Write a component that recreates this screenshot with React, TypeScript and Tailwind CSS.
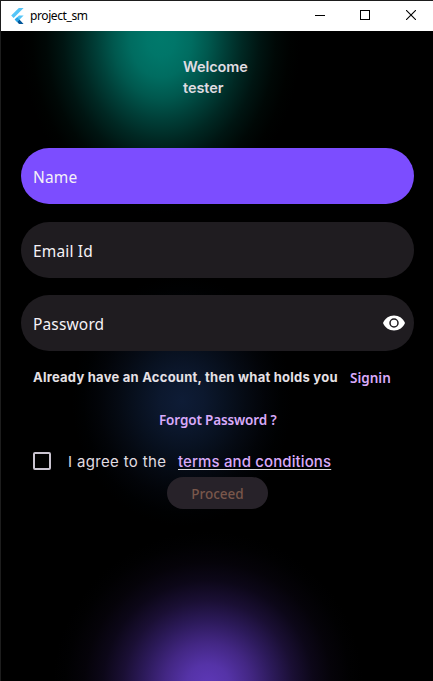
import React from "react";

const segoe = "font-['Noto_Sans','Open_Sans',sans-serif]";
const grotesk = "font-['Inter','Liberation_Sans',sans-serif]";

function FlutterLogo() {
  return (
    <svg width="13" height="16" viewBox="0 0 13 16" className="ml-[10px] mt-[-1px] shrink-0">
      <path d="M7.8 0H12.6L2.6 10L0.2 7.6Z" fill="#54c5f8" />
      <path d="M8 7.4H12.6L8.6 11.5L6.1 13.9L3.7 11.6Z" fill="#54c5f8" />
      <path d="M6 13.8L8.4 11.4L12.6 15.9H8Z" fill="#01579b" />
      <path d="M3.7 11.6L6.1 9.3L8.5 11.6L6.1 13.9Z" fill="#29a6e8" />
    </svg>
  );
}

function EyeIcon() {
  return (
    <svg width="24" height="24" viewBox="0 0 24 24" className="mt-[-1px]">
      <path d="M12 4.5C7 4.5 2.73 7.61 1 12c1.73 4.39 6 7.5 11 7.5s9.27-3.11 11-7.5c-1.73-4.39-6-7.5-11-7.5z" fill="white" />
      <circle cx="12" cy="12" r="4" fill="none" stroke="#1f1c20" strokeWidth="1.5" />
    </svg>
  );
}

function TitleBar() {
  return (
    <header className="flex h-[30px] shrink-0 items-center bg-white text-black">
      <FlutterLogo />
      <span className={`${segoe} ml-[6px] w-[59px] whitespace-nowrap text-[12px] leading-4 tracking-[-0.4px]`}>
        project_sm
      </span>
      <div className="ml-auto flex h-full pb-[2px]">
        <span className="flex w-[45px] items-center justify-center">
          <svg width="10" height="10" shapeRendering="crispEdges"><path d="M0 5.5H10" stroke="black" /></svg>
        </span>
        <span className="flex w-[46px] items-center justify-center">
          <svg width="10" height="10" shapeRendering="crispEdges"><path d="M.5 .5H9.5V9.5H.5Z" fill="none" stroke="black" /></svg>
        </span>
        <span className="flex w-[45px] items-center justify-center">
          <svg width="10" height="10"><path d="M0 0L10 10M10 0L0 10" stroke="black" strokeWidth="1.1" /></svg>
        </span>
      </div>
    </header>
  );
}

function Field({ label, active = false, icon }: { label: string; active?: boolean; icon?: React.ReactNode }) {
  return (
    <div className={`flex h-14 items-center justify-between rounded-[28px] pl-3 pr-[8px] ${active ? "bg-[#7c4dff]" : "bg-[#1f1c20]"}`}>
      <span className={`${segoe} mt-[2px] text-[15.5px] leading-6 tracking-[0.15px] text-[#f5f2f7]`}>{label}</span>
      {icon}
    </div>
  );
}

const glows =
  "bg-[radial-gradient(ellipse_140px_175px_at_160px_8px,#00796b_0%,#007669_10%,#006c60_22%,#00584e_34%,#003f38_46%,#002823_58%,#001512_70%,#000806_82%,#000201_92%,transparent_100%),radial-gradient(circle_155px_at_207px_655px,#5e38b8_0%,#5533a7_14%,#432784_28%,#2c1a5a_42%,#1a0f34_55%,#0c0718_68%,#050309_80%,#010102_92%,transparent_100%),radial-gradient(ellipse_110px_125px_at_181px_370px,#0e1c36_0%,#0c182e_20%,#081120_40%,#050a13_58%,#020408_76%,#000102_90%,transparent_100%)]";

export default function App() {
  return (
    <div className="flex h-[681px] w-[433px] flex-col overflow-hidden border-l border-t border-[#1d1d1d] bg-black">
      <TitleBar />
      <main className={`flex grow flex-col bg-black ${glows}`}>
        <h1 className={`${grotesk} ml-[182px] mt-[25px] w-[66px] text-[14.5px] font-semibold leading-[21px] tracking-[-0.08px] text-[#e0dde2]`}>
          Welcome tester
        </h1>
        <div className="ml-5 mr-[19px] mt-[50px] flex flex-col">
          <Field label="Name" active />
          <div className="mt-[18px]"><Field label="Email Id" /></div>
          <div className="mt-[17px]">
            <Field label="Password" icon={<EyeIcon />} />
          </div>
        </div>
        <div className="ml-8 mt-[17px] flex h-5 items-center whitespace-nowrap">
          <span className={`${grotesk} w-[317px] text-[13px] font-bold tracking-[0.24px] text-[#e6e1e5]`}>
            Already have an Account, then what holds you
          </span>
          <button className={`${segoe} text-[13.5px] font-semibold leading-5 text-[#d9aafa]`}>Signin</button>
        </div>
        <button className={`${segoe} ml-[158px] mt-[22px] h-5 w-[118px] whitespace-nowrap text-left text-[13.5px] font-semibold leading-5 tracking-[-0.14px] text-[#d9aafa]`}>
          Forgot Password ?
        </button>
        <div className={`${grotesk} ml-8 mt-[19px] flex h-6 items-center whitespace-nowrap text-[15px] text-[#e0dde2]`}>
          <span className="h-[18px] w-[18px] rounded-[2px] border-2 border-[#cac4d0]" />
          <span className="ml-[17px] w-[110px] pt-[2px] tracking-[0.34px]">I agree to the</span>
          <a className="pt-[2px] font-medium tracking-[0.12px] text-[#d9aafa] underline decoration-[#e0dde2] decoration-1 underline-offset-2">terms and conditions</a>
        </div>
        <button className={`${segoe} ml-[166px] mt-1 flex h-8 w-[101px] items-center justify-center rounded-full bg-[#272229] pt-[2px] text-[13.5px] font-medium text-[#79574b]`}>
          Proceed
        </button>
      </main>
    </div>
  );
}
